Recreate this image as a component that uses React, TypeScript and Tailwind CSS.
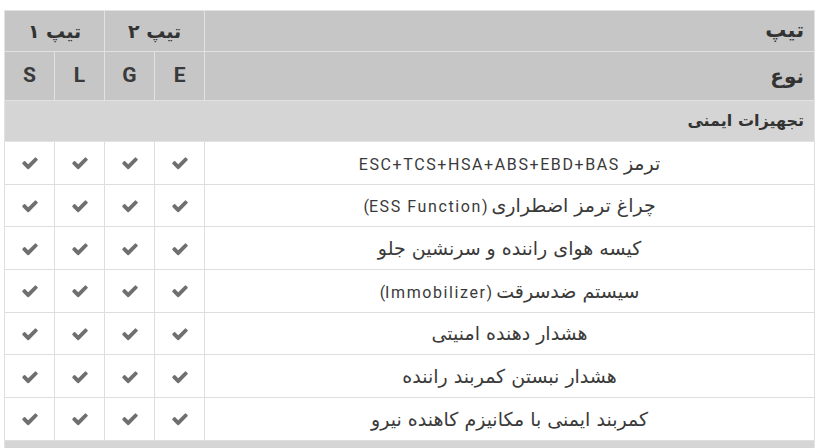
import React from 'react'

// each row: persian part plus an optional latin part (roboto, spaced)
const rows: { fa: string; en?: string }[] = [
  { fa: 'ترمز', en: 'ESC+TCS+HSA+ABS+EBD+BAS' },
  { fa: 'چراغ ترمز اضطراری', en: '(ESS Function)' },
  { fa: 'کیسه هوای راننده و سرنشین جلو' },
  { fa: 'سیستم ضدسرقت', en: '(Immobilizer)' },
  { fa: 'هشدار دهنده امنیتی' },
  { fa: 'هشدار نبستن کمربند راننده' },
  { fa: 'کمربند ایمنی با مکانیزم کاهنده نیرو' },
]

function Check() {
  return (
    <svg width="18" height="18" viewBox="0 0 1792 1792" className="inline-block align-middle">
      <path
        fill="#6f6f6f"
        d="M1671 566q0 40-28 68l-724 724-136 136q-28 28-68 28t-68-28l-136-136-362-362q-28-28-28-68t28-68l136-136q28-28 68-28t68 28l294 295 656-657q28-28 68-28t68 28l136 136q28 28 28 68z"
      />
    </svg>
  )
}

const fa = { fontFamily: '"DejaVu Sans", sans-serif' }
const en = { fontFamily: 'Roboto, "Liberation Sans", sans-serif' }

export default function App() {
  return (
    <div className="bg-white w-[822px] h-[448px] overflow-hidden pt-[10px] pl-[4px]" style={fa}>
      <table dir="rtl" className="w-[810px] table-fixed border-collapse text-[#333]">
        <colgroup>
          <col className="w-[610px]" />
          <col className="w-[50px]" />
          <col className="w-[50px]" />
          <col className="w-[50px]" />
          <col className="w-[50px]" />
        </colgroup>
        <thead>
          <tr className="h-[41px] bg-[#c6c6c6]">
            <th className="border border-[#e2e2e2] text-right pr-[10px] text-[21px] font-bold">تیپ</th>
            <th colSpan={2} className="border border-[#e2e2e2] text-center text-[19px] font-bold">تیپ ۲</th>
            <th colSpan={2} className="border border-[#e2e2e2] text-center text-[19px] font-bold">تیپ ۱</th>
          </tr>
          <tr className="h-[49px] bg-[#c6c6c6]">
            <th className="border border-[#e2e2e2] text-right pr-[10px] text-[20px] font-bold">نوع</th>
            {['E', 'G', 'L', 'S'].map((t) => (
              <th key={t} style={en} className="border border-[#e2e2e2] text-center text-[21px] font-bold text-[#3a3a3a]">
                {t}
              </th>
            ))}
          </tr>
        </thead>
        <tbody>
          <tr className="h-[41px] bg-[#d5d5d5]">
            <td colSpan={5} className="border border-[#e2e2e2] text-right pr-[10px] text-[16px] font-bold">
              تجهیزات ایمنی
            </td>
          </tr>
          {rows.map((r) => (
            <tr key={r.fa} className="h-[42.7px] bg-white">
              <td className="border border-[#dedede] text-center text-[19px] text-[#3a3a3a]">
                <span>{r.fa}</span>
                {r.en && (
                  <span style={en} className="text-[16px] tracking-[1.6px]">
                    {' '}
                    <bdi>{r.en}</bdi>
                  </span>
                )}
              </td>
              {[0, 1, 2, 3].map((i) => (
                <td key={i} className="border border-[#dedede] text-center">
                  <Check />
                </td>
              ))}
            </tr>
          ))}
          <tr className="h-[41px] bg-[#d5d5d5]">
            <td colSpan={5} className="border border-[#e2e2e2] text-right pr-[10px] text-[16px] font-bold">
              {' '}
            </td>
          </tr>
        </tbody>
      </table>
    </div>
  )
}
